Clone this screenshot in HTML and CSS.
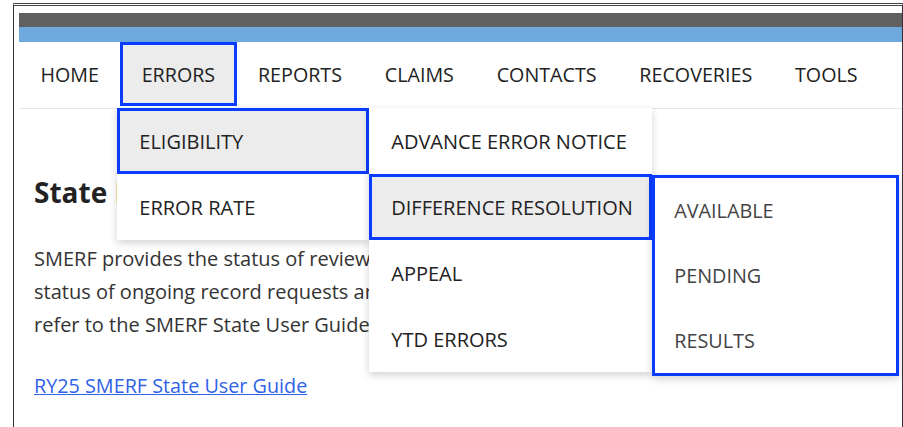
FILE: index.html
```html
<!DOCTYPE html>
<html lang="en">
<head>
<meta charset="utf-8">
<title>SMERF State</title>
<link rel="stylesheet" href="styles.css">
</head>
<body>
<div class="window">
  <header class="site-header">
    <div class="topbar"></div>
    <div class="accentbar"></div>
    <nav class="mainnav">
      <ul class="navlist">
        <li class="navitem">HOME</li>
        <li class="navitem is-open">ERRORS
          <ul class="menu menu-l1">
            <li class="menuitem is-active">ELIGIBILITY
              <ul class="menu menu-l2">
                <li class="menuitem">ADVANCE ERROR NOTICE</li>
                <li class="menuitem is-active">DIFFERENCE RESOLUTION
                  <ul class="menu menu-l3">
                    <li class="menuitem">AVAILABLE</li>
                    <li class="menuitem">PENDING</li>
                    <li class="menuitem">RESULTS</li>
                  </ul>
                </li>
                <li class="menuitem">APPEAL</li>
                <li class="menuitem">YTD ERRORS</li>
              </ul>
            </li>
            <li class="menuitem">ERROR RATE</li>
          </ul>
        </li>
        <li class="navitem">REPORTS</li>
        <li class="navitem">CLAIMS</li>
        <li class="navitem">CONTACTS</li>
        <li class="navitem">RECOVERIES</li>
        <li class="navitem">TOOLS</li>
      </ul>
    </nav>
  </header>
  <main class="content">
    <h1 class="page-title">State Dashboard</h1>
    <p class="intro">SMERF provides the status of reviews and findings, and the<br>status of ongoing record requests and appeals. Please<br>refer to the SMERF State User Guide for more information.</p>
    <p class="guide"><a href="#" class="guide-link">RY25 SMERF State User Guide</a></p>
  </main>
</div>
</body>
</html>
```

FILE: styles.css
```css
* {
  box-sizing: border-box;
}

body {
  margin: 0;
  background: #fff;
  color: #222;
  font-family: "Open Sans", "Noto Sans", sans-serif;
}

/* outer frame */
.window {
  margin: 3px 0 0 13px;
  width: 890px;
  height: 424px;
  border: 1px solid #333;
  border-top: 3px double #444;
  border-bottom: none;
  padding: 7px 0 0 5px;
  overflow: hidden;
}

.topbar {
  height: 14px;
  background: #606060;
}

.accentbar {
  height: 15px;
  background: #6fa8dc;
}

/* main navigation */
.mainnav {
  position: relative;
  z-index: 2;
  height: 67px;
  border-bottom: 1px solid #e6e6e6;
}

.navlist {
  display: flex;
  margin: 0;
  padding: 0;
  list-style: none;
}

.navitem {
  position: relative;
  height: 64px;
  padding: 1px 21.4px 0;
  line-height: 64px;
  font-size: 19.7px;
  color: #222;
  white-space: nowrap;
}

.navitem.is-open {
  background: #ececec;
  box-shadow: inset 0 0 0 3px #0a3cff;
}

/* dropdown menus */
.menu {
  position: absolute;
  margin: 0;
  padding: 0;
  list-style: none;
  background: #fff;
  box-shadow: 0 3px 8px rgba(0, 0, 0, 0.18);
}

.menuitem {
  position: relative;
  height: 66px;
  padding: 1px 22px 0;
  line-height: 66px;
  font-size: 20px;
  color: #222;
  white-space: nowrap;
}

.menuitem.is-active {
  background: #ececec;
  box-shadow: inset 0 0 0 3px #0a3cff;
}

.menu-l1 {
  left: -3px;
  top: 66px;
  width: 252px;
}

.menu-l2 {
  left: 100%;
  top: 0;
  width: 283px;
}

.menu-l3 {
  left: 100%;
  top: 1px;
  width: 247px;
  border: 3px solid #0a3cff;
}

.menu-l3 .menuitem {
  height: 65px;
  padding: 0 19px;
  line-height: 65px;
  font-size: 19.8px;
  color: #444;
}

/* page body: the open menus cover the right part of the text column */
.content {
  padding-left: 15px;
}

.page-title {
  width: 85px;
  margin: 64px 0 0;
  overflow: hidden;
  white-space: nowrap;
  font-size: 28px;
  font-weight: 700;
  line-height: 38px;
  color: #222;
}

.intro {
  width: 336px;
  margin: 31px 0 0;
  overflow: hidden;
  white-space: nowrap;
  font-size: 20px;
  line-height: 33px;
  color: #333;
}

.guide {
  margin: 28px 0 0;
  font-size: 19.8px;
  line-height: 33px;
}

.guide-link {
  color: #2f62e8;
}
```
